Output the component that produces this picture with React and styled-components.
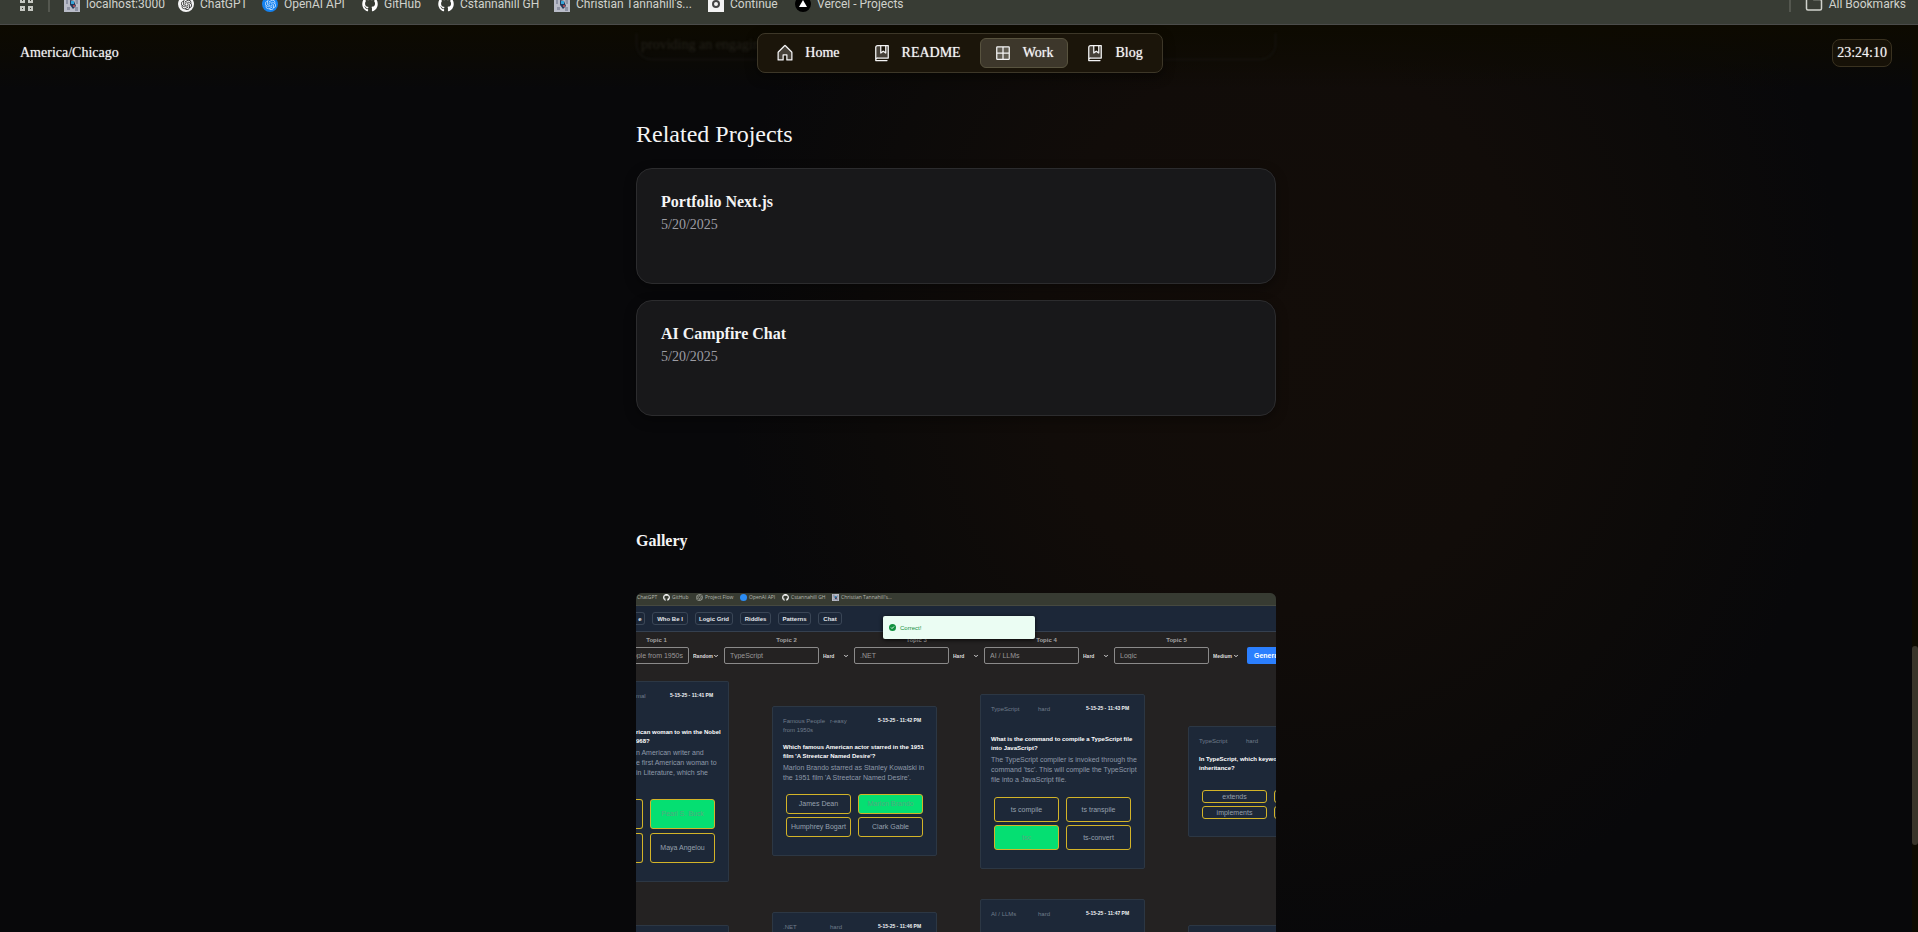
import React from "react";
import styled, { createGlobalStyle } from "styled-components";
import {
  PiHouseDuotone,
  PiBookBookmarkDuotone,
  PiGridFourDuotone,
} from "react-icons/pi";
import { FaGithub } from "react-icons/fa";
import { SiOpenai } from "react-icons/si";
import { ChevronDown, Folder } from "lucide-react";

const GlobalStyle = createGlobalStyle`
  * { box-sizing: border-box; }
  body {
    margin: 0;
    background: #08080a;
    color: #f4f4f5;
    font-family: "Liberation Serif", "Times New Roman", serif;
  }
  h2, h3, p { margin: 0; }
  a { color: inherit; text-decoration: none; }
  button, input, select { font: inherit; color: inherit; }
`;

const Page = styled.div`
  position: relative;
  display: flex;
  flex-direction: column;
  height: 100vh;
  overflow: hidden;
`;

/* ---------- browser bookmarks ---------- */

const BookmarkBar = styled.nav`
  flex: none;
  display: flex;
  align-items: center;
  height: 41px;
  margin-top: -16px;
  padding: 0 12px 0 19px;
  background: #383c34;
  border-bottom: 1px solid #4b4c4a;
  color: #d0d2cc;
  font: 12px/16px Roboto, "Noto Sans", sans-serif;
`;

const AppsButton = styled.button`
  display: flex;
  padding: 0;
  border: 0;
  background: none;
  color: #c6c8c2;
`;

const Divider = styled.span`
  width: 2px;
  height: 16px;
  margin: 0 14px;
  background: #54574f;
`;

const Bookmark = styled.a`
  display: flex;
  align-items: center;
  gap: 6px;
  width: ${(p) => p.$width};
  white-space: nowrap;

  svg { flex: none; }
`;

const Spacer = styled.div`
  flex: 1;
`;

const Disc = styled.span`
  display: grid;
  place-items: center;
  flex: none;
  width: 16px;
  height: 16px;
  border-radius: 50%;
  background: ${(p) => p.$bg};
  color: ${(p) => p.$fg};
`;

const PixelFavicon = ({ size = 16 }) => (
  <svg width={size} height={size} viewBox="0 0 16 16" aria-hidden="true">
    <rect width="16" height="16" fill="#b9bcc8" />
    <path d="M2 1h4v3H4v4H2zM11 3h3v5h-2zM3 11h3v3H3zM11 11h3v4h-3z" fill="#8d92a4" />
    <path d="M6 4l4 1 2 5-3 3-3-4z" fill="#25385a" />
    <path d="M7 5h3v3H7z" fill="#36a4d8" />
    <path d="M9 9h2v2H9z" fill="#a34a55" />
  </svg>
);

const ContinueIcon = () => (
  <svg width="16" height="16" viewBox="0 0 16 16" aria-hidden="true">
    <rect width="16" height="16" fill="#f3f3f3" />
    <circle cx="8" cy="8" r="3" fill="none" stroke="#444" strokeWidth="2" />
  </svg>
);

const VercelIcon = () => (
  <svg width="16" height="16" viewBox="0 0 16 16" aria-hidden="true">
    <circle cx="8" cy="8" r="8" fill="#000" />
    <path d="M8 4l4 7H4z" fill="#fff" />
  </svg>
);

const AppsIcon = () => (
  <svg width="15" height="15" viewBox="0 0 15 15" fill="none" stroke="currentColor" strokeWidth="2" aria-hidden="true">
    <path d="M2 2h3v3H2zM10 2h3v3h-3zM2 10h3v3H2zM10 10h3v3h-3z" />
  </svg>
);

const GptIcon = () => (
  <Disc $bg="#f4f4f4" $fg="#222"><SiOpenai size={11} /></Disc>
);
const ApiIcon = () => (
  <Disc $bg="#1482f0" $fg="#cfe6ff"><SiOpenai size={11} /></Disc>
);
const GitIcon = () => <FaGithub size={16} color="#fff" />;

const bookmarks = [
  { label: "localhost:3000", icon: PixelFavicon, width: "114px" },
  { label: "ChatGPT", icon: GptIcon, width: "84px" },
  { label: "OpenAI API", icon: ApiIcon, width: "100px" },
  { label: "GitHub", icon: GitIcon, width: "76px" },
  { label: "Cstannahill GH", icon: GitIcon, width: "116px" },
  { label: "Christian Tannahill's...", icon: PixelFavicon, width: "154px" },
  { label: "Continue", icon: ContinueIcon, width: "87px" },
  { label: "Vercel - Projects", icon: VercelIcon, width: "auto" },
];

/* ---------- site header ---------- */

const Stage = styled.div`
  position: relative;
  flex: 1;
  min-height: 0;
  padding-right: 6px;
  background: radial-gradient(ellipse 560px 620px at 67% 34%, #130d09 0%, #110c09 45%, #0c0a09 75%, #08080a 100%) #08080a;
`;

const Header = styled.header`
  position: absolute;
  inset: 0 0 auto 0;
  display: grid;
  grid-template-columns: 1fr auto 1fr;
  align-items: center;
  padding: 8px 26px 16px 28px;
  background: linear-gradient(#0d0a00, rgba(13, 10, 0, 0.5) 55%, rgba(13, 10, 0, 0));
  font-size: 14px;
  line-height: 20px;
`;

const Zone = styled.span`
  margin-left: -8px;
  text-shadow: 0 0 1px rgba(255, 255, 255, 0.5);
`;

const SiteNav = styled.nav`
  position: relative;
  display: flex;
  gap: 4px;
  padding: 4px;
  border: 1px solid #3d3728;
  border-radius: 8px;
  background: #1b150a;
  box-shadow: 0 4px 12px rgba(0, 0, 0, 0.4);
`;

const NavLink = styled.a`
  display: flex;
  align-items: center;
  gap: 10px;
  height: 30px;
  padding: 0 14px 0 12px;
  border: 1px solid ${(p) => (p.$active ? "#58533f" : "transparent")};
  border-radius: 6px;
  background: ${(p) => (p.$active ? "#3d372b" : "transparent")};
  text-shadow: 0 0 1px rgba(255, 255, 255, 0.7);
`;

const Clock = styled.time`
  justify-self: end;
  padding: 3px 4px;
  border: 1px solid #3a3220;
  border-radius: 8px;
  background: #161107;
  text-shadow: 0 0 1px rgba(255, 255, 255, 0.5);
`;

/* the card that is scrolling away beneath the header */
const FadedCard = styled.div`
  position: absolute;
  top: 8px;
  left: 50%;
  width: 640px;
  height: 27px;
  margin-left: -323px;
  padding: 0 4px;
  border: 1px solid #171613;
  border-top: 0;
  border-radius: 0 0 16px 16px;
  color: #24221b;
  font-size: 14px;
  line-height: 24px;
  filter: blur(1px);
`;

/* ---------- content ---------- */

const Content = styled.main`
  display: flex;
  flex-direction: column;
  width: 100%;
  max-width: 640px;
  margin: 0 auto;
  padding-top: 91px;
`;

const SectionTitle = styled.h2`
  font-size: 24px;
  font-weight: 400;
  line-height: 36px;
`;

const ProjectList = styled.div`
  display: flex;
  flex-direction: column;
  gap: 16px;
  margin-top: 16px;
`;

const ProjectCard = styled.a`
  min-height: 116px;
  padding: 24px;
  border: 1px solid #2c2c2e;
  border-radius: 16px;
  background: #18181a;
  box-shadow: 0 4px 12px rgba(0, 0, 0, 0.35);
`;

const ProjectName = styled.h3`
  font-size: 16px;
  font-weight: 700;
  line-height: 18px;
`;

const ProjectDate = styled.p`
  margin-top: 4px;
  color: #9c9ca3;
  font-size: 14px;
  line-height: 20px;
`;

const GalleryTitle = styled.h2`
  margin-top: 116px;
  font-size: 16px;
  font-weight: 700;
  line-height: 18px;
`;

/* ---------- gallery frame: a small quiz application ---------- */

const Frame = styled.section`
  position: relative;
  height: 360px;
  margin-top: 43px;
  overflow: hidden;
  border-radius: 6px;
  background: #242222;
  color: #8e99a8;
  font: 6px/10px "Liberation Sans", Arial, sans-serif;
`;

const FrameBookmarks = styled.div`
  display: flex;
  align-items: center;
  height: 13px;
  padding: 0 1px 4px;
  border-bottom: 1px solid #464940;
  background: #373b32;
  color: #b5b8b0;
`;

const FrameBookmark = styled.span`
  display: flex;
  align-items: center;
  gap: 2px;
  width: ${(p) => p.$width};
  white-space: nowrap;
  font: 5px/8px "Open Sans", sans-serif;
`;

const BlueDot = styled.span`
  width: 7px;
  height: 7px;
  border-radius: 50%;
  background: #2b8cf5;
`;

const FrameNav = styled.div`
  display: flex;
  align-items: center;
  gap: 7px;
  height: 26px;
  border-bottom: 1px solid #35404f;
  background: #1c2738;
`;

const FrameNavButton = styled.button`
  width: ${(p) => p.$width};
  height: 13px;
  padding: 0;
  border: 1px solid #3a4656;
  border-left-width: ${(p) => (p.$cut ? 0 : "1px")};
  border-radius: ${(p) => (p.$cut ? "0 3px 3px 0" : "3px")};
  background: transparent;
  color: #e3e6ea;
  font-weight: 700;
  line-height: 10px;
  text-align: center;
`;

const Toast = styled.div`
  position: absolute;
  top: 23px;
  left: 247px;
  display: flex;
  align-items: center;
  gap: 4px;
  width: 152px;
  height: 23px;
  padding: 0 6px;
  border-radius: 2px;
  background: #ebfdf3;
  color: #12913f;
  box-shadow: 0 1px 4px rgba(0, 0, 0, 0.8);
`;

const Topics = styled.div`
  display: flex;
  gap: 5px;
  margin-left: -42px;
  padding-top: 4px;
`;

const Topic = styled.div`
  display: grid;
  grid-template-columns: 95px 26px;
  column-gap: 4px;
  width: 125px;
  flex: none;
`;

const TopicLabel = styled.label`
  grid-column: 1 / -1;
  margin-bottom: 2px;
  color: #a3a2a2;
  line-height: 9px;
  font-weight: 700;
  text-align: center;
`;

const TopicInput = styled.input`
  width: 95px;
  height: 17px;
  padding: 0 5px;
  border: 1px solid #8b8a8a;
  border-radius: 2px;
  background: transparent;
  color: #9a9999;
  font-size: 7px;
  text-align: ${(p) => (p.$end ? "right" : "left")};
`;

const LevelField = styled.span`
  position: relative;
  display: flex;
  align-items: center;

  svg { position: absolute; right: 0; }
`;

const LevelSelect = styled.select`
  width: 26px;
  padding: 0;
  border: 0;
  appearance: none;
  background: transparent;
  color: #dededf;
  font-size: 5px;
  font-weight: 700;
`;

const GenerateButton = styled.button`
  flex: none;
  align-self: end;
  width: 45px;
  height: 17px;
  margin-left: 3px;
  padding: 0 7px;
  border: 0;
  border-radius: 2px;
  background: #2b7fff;
  color: #fff;
  font-size: 7px;
  font-weight: 700;
  text-align: left;
`;

const Board = styled.div`
  display: flex;
  align-items: flex-start;
  gap: 43px;
  padding-top: 1px;
`;

const Column = styled.div`
  display: flex;
  flex-direction: column;
  flex: none;
  gap: ${(p) => p.$gap};
  width: ${(p) => p.$width};
  padding-top: ${(p) => p.$top};
`;

const Quiz = styled.article`
  height: ${(p) => p.$height};
  padding: 10px 10px 0;
  border: 1px solid #2c3744;
  border-radius: 2px;
  background: #1d2838;
  ${(p) => p.$cut && "padding-left: 0; border-left: 0; border-radius: 0 2px 2px 0;"}
`;

const QuizMeta = styled.div`
  display: grid;
  grid-template-columns: ${(p) => (p.$cut ? "34px 1fr" : "47px 48px 1fr")};
  min-height: ${(p) => p.$height};
  color: #707c8b;
  line-height: 9px;
`;

const Stamp = styled.time`
  color: #f1f3f5;
  font-size: 5px;
  font-weight: 700;
  line-height: 7px;
  white-space: nowrap;
`;

const Question = styled.p`
  color: #fff;
  font-size: 6px;
  font-weight: 700;
  line-height: 9px;
  white-space: nowrap;
`;

const Answer = styled.p`
  margin-top: 2px;
  font-size: 7px;
  white-space: nowrap;
`;

const Options = styled.div`
  display: grid;
  grid-template-columns: ${(p) => (p.$cut ? "7px 65px" : "65px 65px")};
  gap: ${(p) => p.$gap} 7px;
  margin: ${(p) => p.$top} 3px 0 ${(p) => (p.$cut ? 0 : "3px")};
`;

const Option = styled.button`
  height: ${(p) => p.$height};
  padding: 0;
  border: 1px solid #d3b428;
  border-radius: 3px;
  background: ${(p) => (p.$right ? "#05df72" : "transparent")};
  color: ${(p) => (p.$right ? "#55a880" : "#97a1ae")};
  font-size: 7px;
  line-height: 10px;
  white-space: nowrap;
  ${(p) => p.$cut && "border-left: 0; border-radius: 0 3px 3px 0;"}
`;

/* ---------- page scrollbar ---------- */

const ScrollTrack = styled.div`
  position: absolute;
  inset: 0 0 0 auto;
  width: 6px;
  background: #0d0a00;
`;

const ScrollThumb = styled.div`
  position: absolute;
  top: calc(68% + 4px);
  width: 6px;
  height: 22%;
  border-radius: 3px;
  background: #39352a;
`;

const navItems = [
  { label: "Home", icon: PiHouseDuotone },
  { label: "README", icon: PiBookBookmarkDuotone },
  { label: "Work", icon: PiGridFourDuotone, active: true },
  { label: "Blog", icon: PiBookBookmarkDuotone },
];

const projects = [
  { name: "Portfolio Next.js", date: "5/20/2025" },
  { name: "AI Campfire Chat", date: "5/20/2025" },
];

const topics = [
  { value: "ople from 1950s", level: "Random", end: true },
  { value: "TypeScript", level: "Hard" },
  { value: ".NET", level: "Hard" },
  { value: "AI / LLMs", level: "Hard" },
  { value: "Logic", level: "Medium" },
];

const frameNav = [
  { label: "e", width: "9px", cut: true },
  { label: "Who Be I", width: "36px" },
  { label: "Logic Grid", width: "38px" },
  { label: "Riddles", width: "31px" },
  { label: "Patterns", width: "33px" },
  { label: "Chat", width: "24px" },
];

const columns = [
  {
    width: "93px", top: "16px", gap: "43px",
    quizzes: [
      {
        cut: true, height: "201px", metaHeight: "36px", tags: ["mal"], stamp: "5-15-25 - 11:41 PM",
        question: ["rican woman to win the Nobel", "968?"],
        answer: ["n American writer and", "e first American woman to", "in Literature, which she"],
        optionTop: "21px", optionGap: "4px", optionHeight: "30px",
        options: ["", "Pearl S. Buck", "", "Maya Angelou"], right: 1,
      },
      { cut: true, height: "80px", metaHeight: "30px", tags: [""], stamp: "" },
    ],
  },
  {
    width: "165px", top: "41px", gap: "56px",
    quizzes: [
      {
        height: "150px", metaHeight: "26px", tags: ["Famous People\nfrom 1950s", "r-easy"], stamp: "5-15-25 - 11:42 PM",
        question: ["Which famous American actor starred in the 1951", "film 'A Streetcar Named Desire'?"],
        answer: ["Marlon Brando starred as Stanley Kowalski in", "the 1951 film 'A Streetcar Named Desire'."],
        optionTop: "11px", optionGap: "3px", optionHeight: "20px",
        options: ["James Dean", "Marlon Brando", "Humphrey Bogart", "Clark Gable"], right: 1,
      },
      { height: "80px", metaHeight: "30px", tags: [".NET", "hard"], stamp: "5-15-25 - 11:46 PM" },
    ],
  },
  {
    width: "165px", top: "29px", gap: "30px",
    quizzes: [
      {
        height: "175px", metaHeight: "30px", tags: ["TypeScript", "hard"], stamp: "5-15-25 - 11:43 PM",
        question: ["What is the command to compile a TypeScript file", "into JavaScript?"],
        answer: ["The TypeScript compiler is invoked through the", "command 'tsc'. This will compile the TypeScript", "file into a JavaScript file."],
        optionTop: "12px", optionGap: "3px", optionHeight: "25px",
        options: ["ts compile", "ts transpile", "tsc", "ts-convert"], right: 2,
      },
      { height: "80px", metaHeight: "30px", tags: ["AI / LLMs", "hard"], stamp: "5-15-25 - 11:47 PM" },
    ],
  },
  {
    width: "164px", top: "61px", gap: "88px",
    quizzes: [
      {
        height: "111px", metaHeight: "18px", tags: ["TypeScript", "hard"], stamp: "5-15-25 - 11:44 PM",
        question: ["In TypeScript, which keyword is used for", "inheritance?"],
        optionTop: "17px", optionGap: "3px", optionHeight: "13px",
        options: ["extends", "inherits", "implements", "super"], right: -1,
      },
      { height: "80px", metaHeight: "30px", tags: [""], stamp: "" },
    ],
  },
];

const lines = (list) =>
  list.map((line, i) => (
    <React.Fragment key={i}>
      {i > 0 && <br />}
      {line}
    </React.Fragment>
  ));

function QuizCard({ quiz }) {
  return (
    <Quiz $height={quiz.height} $cut={quiz.cut}>
      <QuizMeta $height={quiz.metaHeight} $cut={quiz.cut}>
        {quiz.tags.map((tag, i) => (
          <span key={i}>{lines(tag.split("\n"))}</span>
        ))}
        <Stamp>{quiz.stamp}</Stamp>
      </QuizMeta>
      {quiz.question && <Question>{lines(quiz.question)}</Question>}
      {quiz.answer && <Answer>{lines(quiz.answer)}</Answer>}
      {quiz.options && (
        <Options $cut={quiz.cut} $gap={quiz.optionGap} $top={quiz.optionTop}>
          {quiz.options.map((option, i) => (
            <Option
              key={i}
              type="button"
              $height={quiz.optionHeight}
              $right={i === quiz.right}
              $cut={quiz.cut && i % 2 === 0}
            >
              {option}
            </Option>
          ))}
        </Options>
      )}
    </Quiz>
  );
}

function GalleryFrame() {
  return (
    <Frame>
      <FrameBookmarks>
        <FrameBookmark $width="26px">ChatGPT</FrameBookmark>
        <FrameBookmark $width="33px"><FaGithub size={7} color="#fff" />GitHub</FrameBookmark>
        <FrameBookmark $width="44px"><SiOpenai size={7} />Project Flow</FrameBookmark>
        <FrameBookmark $width="42px"><BlueDot />OpenAI API</FrameBookmark>
        <FrameBookmark $width="50px"><FaGithub size={7} color="#fff" />Cstannahill GH</FrameBookmark>
        <FrameBookmark $width="auto"><PixelFavicon size={7} />Christian Tannahill's...</FrameBookmark>
      </FrameBookmarks>
      <FrameNav>
        {frameNav.map((item) => (
          <FrameNavButton key={item.label} type="button" $width={item.width} $cut={item.cut}>
            {item.label}
          </FrameNavButton>
        ))}
      </FrameNav>
      <Topics>
        {topics.map((topic, i) => (
          <Topic key={i}>
            <TopicLabel htmlFor={`topic-${i}`}>Topic {i + 1}</TopicLabel>
            <TopicInput id={`topic-${i}`} defaultValue={topic.value} $end={topic.end} />
            <LevelField>
              <LevelSelect aria-label={`Topic ${i + 1} level`} defaultValue={topic.level}>
                <option>{topic.level}</option>
              </LevelSelect>
              <ChevronDown size={6} strokeWidth={4} color="#dededf" />
            </LevelField>
          </Topic>
        ))}
        <GenerateButton type="button">Generate</GenerateButton>
      </Topics>
      <Board>
        {columns.map((column, i) => (
          <Column key={i} $width={column.width} $top={column.top} $gap={column.gap}>
            {column.quizzes.map((quiz, j) => (
              <QuizCard key={j} quiz={quiz} />
            ))}
          </Column>
        ))}
      </Board>
      <Toast role="status">
        <svg width="7" height="7" viewBox="0 0 14 14" aria-hidden="true">
          <circle cx="7" cy="7" r="7" fill="#12913f" />
          <path d="M4 7l2 2 4-4" fill="none" stroke="#ebfdf3" strokeWidth="2" />
        </svg>
        Correct!
      </Toast>
    </Frame>
  );
}

export default function App() {
  return (
    <>
      <GlobalStyle />
      <Page>
        <BookmarkBar aria-label="Bookmarks">
          <AppsButton type="button" aria-label="Apps"><AppsIcon /></AppsButton>
          <Divider />
          {bookmarks.map(({ label, icon: Icon, width }) => (
            <Bookmark key={label} href="#" $width={width}>
              <Icon />
              {label}
            </Bookmark>
          ))}
          <Spacer />
          <Divider />
          <Bookmark href="#" $width="auto">
            <Folder size={18} strokeWidth={2} />
            All Bookmarks
          </Bookmark>
        </BookmarkBar>
        <Stage>
          <Content>
            <SectionTitle>Related Projects</SectionTitle>
            <ProjectList>
              {projects.map((project) => (
                <ProjectCard key={project.name} href="#">
                  <ProjectName>{project.name}</ProjectName>
                  <ProjectDate>{project.date}</ProjectDate>
                </ProjectCard>
              ))}
            </ProjectList>
            <GalleryTitle>Gallery</GalleryTitle>
            <GalleryFrame />
          </Content>
          <Header>
            <FadedCard>providing an engaging</FadedCard>
            <Zone>America/Chicago</Zone>
            <SiteNav aria-label="Main">
              {navItems.map(({ label, icon: Icon, active }) => (
                <NavLink key={label} href="#" $active={active} aria-current={active ? "page" : undefined}>
                  <Icon size={20} />
                  {label}
                </NavLink>
              ))}
            </SiteNav>
            <Clock>23:24:10</Clock>
          </Header>
          <ScrollTrack>
            <ScrollThumb />
          </ScrollTrack>
        </Stage>
      </Page>
    </>
  );
}
